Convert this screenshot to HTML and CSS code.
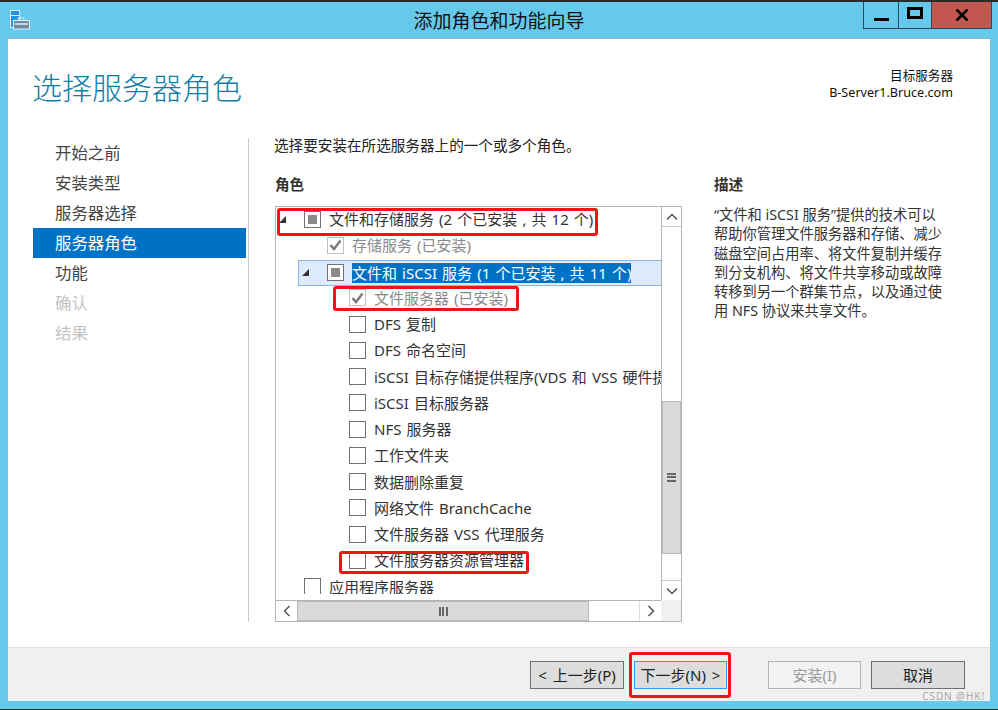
FILE: index.html
```html
<!DOCTYPE html>
<html lang="zh-CN">
<head>
    <meta charset="UTF-8">
    <meta name="viewport" content="width=device-width, initial-scale=1.0">
    <title>添加角色和功能向导</title>
    <link rel="stylesheet" href="styles.css">
</head>
<body>
    <div class="window">
        <div class="titlebar">
            <div class="app-icon">
                <svg width="21" height="21" viewBox="0 0 21 21">
                    <rect x="0.5" y="0.5" width="9" height="17" fill="#2a8fe0" stroke="#d5eefa"/>
                    <rect x="1" y="5" width="8" height="1" fill="#d5eefa"/>
                    <path d="M8 9.5V8h6v1.5" fill="none" stroke="#d5eefa"/>
                    <rect x="3.5" y="10.5" width="16" height="8.5" fill="#6f8ba3" stroke="#e2f2fa"/>
                    <rect x="5" y="13" width="13" height="2" fill="#c7d2da"/>
                </svg>
            </div>
            <div class="window-title">添加角色和功能向导</div>
            <div class="window-controls">
                <div class="control control-min"><span class="min-glyph"></span></div>
                <div class="control control-max"><span class="max-glyph"></span></div>
                <div class="control control-close">
                    <svg width="14" height="12" viewBox="0 0 14 12"><path d="M1.5 0.5L12.5 11.5M12.5 0.5L1.5 11.5" stroke="#000" stroke-width="2.6" fill="none"/></svg>
                </div>
            </div>
        </div>

        <div class="content">
            <div class="page-head">
                <h1>选择服务器角色</h1>
                <div class="target">目标服务器<br>B-Server1.Bruce.com</div>
            </div>

            <div class="columns">
                <ul class="steps">
                    <li>开始之前</li>
                    <li>安装类型</li>
                    <li>服务器选择</li>
                    <li class="active">服务器角色</li>
                    <li>功能</li>
                    <li class="off">确认</li>
                    <li class="off">结果</li>
                </ul>

                <div class="main">
                    <p class="intro">选择要安装在所选服务器上的一个或多个角色。</p>
                    <div class="panes">
                        <div class="roles">
                            <div class="label">角色</div>
                            <div class="tree">
                                <div class="tree-view">
                                    <div class="rows" id="rows"></div>
                                </div>
                                <div class="vscroll">
                                    <div class="sb-btn">
                                        <svg width="12" height="8" viewBox="0 0 12 8"><path d="M1 6.5L6 1.5L11 6.5" fill="none" stroke="#555" stroke-width="1.5"/></svg>
                                    </div>
                                    <div class="sb-space-top"></div>
                                    <div class="sb-thumb-v"><span class="grip-h"></span></div>
                                    <div class="sb-space-bottom"></div>
                                    <div class="sb-btn">
                                        <svg width="12" height="8" viewBox="0 0 12 8"><path d="M1 1.5L6 6.5L11 1.5" fill="none" stroke="#555" stroke-width="1.5"/></svg>
                                    </div>
                                </div>
                                <div class="hscroll">
                                    <div class="sb-btn-h">
                                        <svg width="8" height="12" viewBox="0 0 8 12"><path d="M6.5 1L1.5 6L6.5 11" fill="none" stroke="#555" stroke-width="1.5"/></svg>
                                    </div>
                                    <div class="sb-thumb-h"><span class="grip-v"></span></div>
                                    <div class="sb-space-h"></div>
                                    <div class="sb-btn-h">
                                        <svg width="8" height="12" viewBox="0 0 8 12"><path d="M1.5 1L6.5 6L1.5 11" fill="none" stroke="#555" stroke-width="1.5"/></svg>
                                    </div>
                                </div>
                                <div class="sb-corner"></div>
                            </div>
                        </div>
                        <div class="desc">
                            <div class="label">描述</div>
                            <p>“文件和 iSCSI 服务”提供的技术可以<br>帮助你管理文件服务器和存储、减少<br>磁盘空间占用率、将文件复制并缓存<br>到分支机构、将文件共享移动或故障<br>转移到另一个群集节点，以及通过使<br>用 NFS 协议来共享文件。</p>
                        </div>
                    </div>
                </div>
            </div>

            <div class="footer">
                <button class="btn btn-prev">&lt; 上一步(P)</button>
                <button class="btn btn-next">下一步(N) &gt;</button>
                <button class="btn btn-install" disabled>安装(I)</button>
                <button class="btn btn-cancel">取消</button>
            </div>
        </div>

        <div class="watermark">CSDN @HK!</div>
        <div class="mark mark-1"></div>
        <div class="mark mark-2"></div>
        <div class="mark mark-3"></div>
        <div class="mark mark-4"></div>
    </div>

    <script>
        const roleRows = [
            { text: "文件和存储服务 (2 个已安装 , 共 12 个)", level: 0, state: "mixed", arrow: true },
            { text: "存储服务 (已安装)", level: 1, state: "checked", off: true },
            { text: "文件和 iSCSI 服务 (1 个已安装 , 共 11 个)", level: 1, state: "mixed", arrow: true, selected: true },
            { text: "文件服务器 (已安装)", level: 2, state: "checked", off: true },
            { text: "DFS 复制", level: 2 },
            { text: "DFS 命名空间", level: 2 },
            { text: "iSCSI 目标存储提供程序(VDS 和 VSS 硬件提供程序)", level: 2 },
            { text: "iSCSI 目标服务器", level: 2 },
            { text: "NFS 服务器", level: 2 },
            { text: "工作文件夹", level: 2 },
            { text: "数据删除重复", level: 2 },
            { text: "网络文件 BranchCache", level: 2 },
            { text: "文件服务器 VSS 代理服务", level: 2 },
            { text: "文件服务器资源管理器", level: 2 },
            { text: "应用程序服务器", level: 0 }
        ];

        function createRow(row) {
            const el = document.createElement('div');
            el.className = 'row level-' + row.level + (row.selected ? ' selected' : '') + (row.off ? ' off' : '');
            let box = '<span class="check"></span>';
            if (row.state === 'mixed') box = '<span class="check mixed"><i></i></span>';
            if (row.state === 'checked') {
                box = '<span class="check ticked"><svg width="13" height="12" viewBox="0 0 13 12"><path d="M1.5 6L5 10L11.5 1.5" fill="none" stroke="#7a7a7a" stroke-width="2.4"/></svg></span>';
            }
            const arrow = row.arrow ? '<span class="arrow"></span>' : '';
            el.innerHTML = `${arrow}${box}<span class="row-text">${row.text}</span>`;
            return el;
        }

        const rows = document.getElementById('rows');
        roleRows.forEach(row => rows.appendChild(createRow(row)));
    </script>
</body>
</html>
```

FILE: styles.css
```css
* {
    box-sizing: border-box;
}
html, body {
    margin: 0;
    height: 100%;
    overflow: hidden;
}
body {
    font-family: "Noto Sans", "Noto Sans CJK SC", sans-serif;
    font-size: 14.5px;
    color: #222;
}
.window {
    position: relative;
    width: 998px;
    height: 710px;
    display: flex;
    flex-direction: column;
    background-color: #65c9ec;
    border-top: 2px solid #2b2b2b;
    border-bottom: 1px solid #2b2b2b;
    padding-bottom: 8px;
}
.titlebar {
    height: 36px;
    flex: none;
    display: grid;
    grid-template-columns: 1fr auto 1fr;
    align-items: start;
}
.app-icon {
    padding: 8px 0 0 10px;
    height: 32px;
}
.window-title {
    font-size: 19px;
    line-height: 26px;
    padding-top: 6px;
    color: #111;
}
.window-controls {
    display: flex;
    justify-content: flex-end;
    padding-right: 6px;
}
.control {
    height: 27px;
    display: flex;
    align-items: center;
    justify-content: center;
    border: 1px solid #2f4a58;
    border-top: none;
    border-left: none;
}
.control-min {
    width: 36px;
    border-left: 1px solid #2f4a58;
}
.control-max {
    width: 33px;
}
.control-close {
    width: 60px;
    background-color: #c1574e;
}
.min-glyph {
    width: 15px;
    height: 3px;
    margin-top: 9px;
    background-color: #000;
}
.max-glyph {
    width: 16px;
    height: 12px;
    margin-bottom: 4px;
    border: 3px solid #000;
}
.content {
    flex: 1;
    margin: 0 8px;
    min-height: 0;
    display: flex;
    flex-direction: column;
    background-color: #fff;
    border-top: 1px solid #8fb4c8;
}
.page-head {
    height: 99px;
    flex: none;
    display: flex;
    justify-content: space-between;
    padding: 29px 37px 0 24px;
}
h1 {
    margin: 0;
    font-size: 30px;
    line-height: 40px;
    font-weight: 300;
    color: #0f7ea6;
}
.target {
    margin-top: -1px;
    font-size: 12.6px;
    line-height: 17px;
    text-align: right;
    color: #111;
}
.columns {
    flex: 1;
    min-height: 0;
    display: flex;
    padding-bottom: 25px;
}
.steps {
    list-style: none;
    margin: 0 0 0 25px;
    padding: 0;
    width: 216px;
    border-right: 1px solid #c8c8c8;
    flex: none;
}
.steps li {
    width: 213px;
    height: 30px;
    line-height: 30px;
    padding-left: 22px;
    font-size: 16.4px;
    color: #444;
}
.steps li.active {
    background-color: #0072c6;
    color: #fff;
}
.steps li.off {
    color: #c4c4c4;
}
.main {
    padding-left: 26px;
}
.intro {
    margin: -1px 0 0 -1px;
    height: 39px;
    line-height: 17px;
    font-size: 14.6px;
    color: #222;
}
.panes {
    display: flex;
    gap: 32px;
}
.label {
    height: 30px;
    line-height: 16px;
    font-size: 14.6px;
    font-weight: bold;
    color: #333;
}
.tree {
    width: 407px;
    height: 416px;
    display: grid;
    grid-template-columns: 1fr 20px;
    grid-template-rows: 1fr 21px;
    border: 1px solid #b5b5b5;
}
.tree-view {
    min-width: 0;
    overflow: hidden;
    background-color: #fff;
}
.rows {
    height: 387px;
    overflow: hidden;
}
.row {
    height: 26.25px;
    display: flex;
    align-items: center;
    position: relative;
    padding-bottom: 2px;
    white-space: nowrap;
    font-size: 15px;
    word-spacing: 1.2px;
    color: #333;
}
.row.level-0 {
    padding-left: 28px;
}
.row.level-1 {
    padding-left: 51px;
}
.row.level-2 {
    padding-left: 73px;
}
.row.off {
    color: #8a8a8a;
}
.row.selected {
    margin-left: 22px;
    padding-left: 28px;
    padding-bottom: 0;
    background-color: #dcebfb;
    border-top: 1px solid #8db6e0;
    border-bottom: 1px solid #8db6e0;
    border-left: 1px solid #8db6e0;
}
.row.selected .row-text {
    background-color: #0072c6;
    color: #fff;
}
.row-text {
    line-height: 20px;
}
.check {
    flex: none;
    width: 17px;
    height: 17px;
    margin-right: 8px;
    border: 1px solid #707070;
    display: flex;
    align-items: center;
    justify-content: center;
    background-color: #fff;
}
.check.ticked {
    border-color: #c0c0c0;
}
.check.mixed i {
    width: 9px;
    height: 9px;
    background-color: #8a8a8a;
}
.arrow {
    position: absolute;
    left: 3px;
    top: 9px;
    width: 0;
    height: 0;
    border-style: solid;
    border-width: 0 0 7px 7px;
    border-color: transparent transparent #333 transparent;
}
.row.selected .arrow {
    left: 3px;
    top: 8px;
}
.vscroll {
    display: flex;
    flex-direction: column;
    background-color: #fff;
    border-left: 1px solid #b5b5b5;
}
.sb-btn {
    height: 20px;
    flex: none;
    display: flex;
    align-items: center;
    justify-content: center;
    border-bottom: 1px solid #c8c8c8;
}
.vscroll .sb-btn:last-child {
    border-bottom: none;
    border-top: 1px solid #c8c8c8;
}
.sb-space-top {
    height: 174px;
}
.sb-thumb-v {
    height: 153px;
    flex: none;
    display: flex;
    align-items: center;
    justify-content: center;
    background-color: #dadada;
    border: 1px solid #b8b8b8;
}
.sb-space-bottom {
    flex: 1;
}
.grip-h {
    width: 9px;
    height: 9px;
    background: repeating-linear-gradient(to bottom, #666 0, #666 2px, transparent 2px, transparent 3.5px);
}
.hscroll {
    display: flex;
    background-color: #fff;
    border-top: 1px solid #b5b5b5;
}
.sb-btn-h {
    width: 21px;
    flex: none;
    display: flex;
    align-items: center;
    justify-content: center;
}
.sb-thumb-h {
    width: 292px;
    flex: none;
    display: flex;
    align-items: center;
    justify-content: center;
    background-color: #dadada;
    border: 1px solid #b8b8b8;
}
.sb-space-h {
    flex: 1;
    border-right: 1px solid #dcdcdc;
}
.grip-v {
    width: 9px;
    height: 9px;
    background: repeating-linear-gradient(to right, #666 0, #666 2px, transparent 2px, transparent 3.5px);
}
.sb-corner {
    background-color: #f0f0f0;
}
.desc {
    width: 240px;
}
.desc p {
    margin: -1px 0 0;
    font-size: 14.25px;
    line-height: 19.3px;
    white-space: nowrap;
    color: #333;
}
.footer {
    height: 54px;
    flex: none;
    display: flex;
    align-items: flex-start;
    padding: 13px 0 0 522px;
    background-color: #f0f0f0;
    border-top: 1px solid #e2e2e2;
}
.btn {
    height: 28px;
    padding: 0;
    font-family: inherit;
    font-size: 15px;
    word-spacing: 2px;
    line-height: 24px;
    color: #222;
    background-color: #dddddd;
    border: 1px solid #707070;
}
.btn-prev {
    width: 94px;
}
.btn-next {
    width: 93px;
    margin-left: 10px;
    border-color: #3399ff;
}
.btn-install {
    width: 93px;
    margin-left: 41px;
    background-color: #f3f3f3;
    border-color: #b4b4b4;
    color: #9a9a9a;
}
.btn-cancel {
    width: 94px;
    margin-left: 10px;
}
.watermark {
    position: absolute;
    right: 13px;
    top: 689px;
    font-size: 10px;
    line-height: 11px;
    letter-spacing: 0.9px;
    color: #a8a8a8;
}
.mark {
    position: absolute;
    border: 3px solid #f01414;
    border-radius: 3px;
}
.mark-1 {
    left: 277px;
    top: 206px;
    width: 321px;
    height: 28px;
}
.mark-2 {
    left: 333px;
    top: 284px;
    width: 186px;
    height: 25px;
}
.mark-3 {
    left: 339px;
    top: 549px;
    width: 190px;
    height: 23px;
}
.mark-4 {
    left: 629px;
    top: 650px;
    width: 102px;
    height: 46px;
}
```
